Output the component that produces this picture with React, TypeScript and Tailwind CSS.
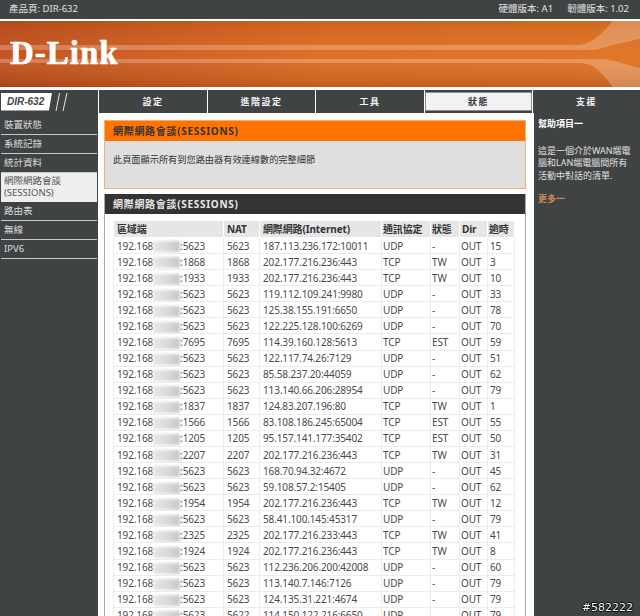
const rows: [string, string, string, string, string, string][] = [
  ['5623', '5623', '187.113.236.172:10011', 'UDP', '-', '15'],
  ['1868', '1868', '202.177.216.236:443', 'TCP', 'TW', '3'],
  ['1933', '1933', '202.177.216.236:443', 'TCP', 'TW', '10'],
  ['5623', '5623', '119.112.109.241:9980', 'UDP', '-', '33'],
  ['5623', '5623', '125.38.155.191:6650', 'UDP', '-', '78'],
  ['5623', '5623', '122.225.128.100:6269', 'UDP', '-', '70'],
  ['7695', '7695', '114.39.160.128:5613', 'TCP', 'EST', '59'],
  ['5623', '5623', '122.117.74.26:7129', 'UDP', '-', '51'],
  ['5623', '5623', '85.58.237.20:44059', 'UDP', '-', '62'],
  ['5623', '5623', '113.140.66.206:28954', 'UDP', '-', '79'],
  ['1837', '1837', '124.83.207.196:80', 'TCP', 'TW', '1'],
  ['1566', '1566', '83.108.186.245:65004', 'TCP', 'EST', '55'],
  ['1205', '1205', '95.157.141.177:35402', 'TCP', 'EST', '50'],
  ['2207', '2207', '202.177.216.236:443', 'TCP', 'TW', '31'],
  ['5623', '5623', '168.70.94.32:4672', 'UDP', '-', '45'],
  ['5623', '5623', '59.108.57.2:15405', 'UDP', '-', '62'],
  ['1954', '1954', '202.177.216.236:443', 'TCP', 'TW', '12'],
  ['5623', '5623', '58.41.100.145:45317', 'UDP', '-', '79'],
  ['2325', '2325', '202.177.216.233:443', 'TCP', 'TW', '41'],
  ['1924', '1924', '202.177.216.236:443', 'TCP', 'TW', '8'],
  ['5623', '5623', '112.236.206.200:42008', 'UDP', '-', '60'],
  ['5623', '5623', '113.140.7.146:7126', 'UDP', '-', '79'],
  ['5623', '5623', '124.135.31.221:4674', 'UDP', '-', '79'],
  ['5623', '5622', '114.150.122.216:6650', 'UDP', '-', '79'],
];

function Banner() {
  return (
    <div className="relative h-[66px] bg-gradient-to-r from-[#c2501c] via-[#dc6c20] to-[#e07222] overflow-hidden">
      <svg className="absolute inset-0" width="640" height="66" viewBox="0 0 640 66">
        <defs>
          <linearGradient id="shade" x1="0" y1="0" x2="0" y2="1">
            <stop offset="0" stopColor="#000" stopOpacity="0.08" />
            <stop offset="0.5" stopColor="#fff" stopOpacity="0.03" />
            <stop offset="1" stopColor="#000" stopOpacity="0.14" />
          </linearGradient>
        </defs>
        <rect width="640" height="66" fill="url(#shade)" />
        <path d="M0 24H580C595 22 603 10 613 0H640V18C610 24 600 29 590 29H0Z" fill="#fff" opacity="0.24" />
        <path d="M0 38H600C615 38 625 44 640 47V66H613C600 50 595 43 580 42H0Z" fill="#fff" opacity="0.24" />
      </svg>
      <span className="absolute left-[10px] top-[14px] text-white font-bold text-[33px] leading-[36px] tracking-[1px] [-webkit-text-stroke:0.6px_white] font-['Liberation_Serif',serif]">
        D-Link
      </span>
    </div>
  );
}

function NavTab({ label, active, w }: { label: string; active?: boolean; w: string }) {
  return (
    <div className={`${w} flex border-l border-white text-[9px] font-bold tracking-[1.5px]`}>
      <div
        className={`flex-1 flex items-center justify-center ${
          active ? 'my-[2px] bg-[#f2f2f2] text-[#333] border border-[#8a8a8a]' : 'text-[#f2f2f2]'
        }`}
      >
        {label}
      </div>
    </div>
  );
}

function SideItem({ label, active, children }: { label?: string; active?: boolean; children?: React.ReactNode }) {
  if (active) {
    return (
      <div className="mx-[1px] h-[29px] bg-[#eeeeee] px-[3px] pt-[2px] text-[#555] text-[9.5px] leading-[12px]">
        {children}
      </div>
    );
  }
  return (
    <div className="mx-[1px] h-[19px] border-b border-[#c8c8c8] px-[3px] flex items-center text-[#dcdcdc] text-[9.5px]">
      {label}
    </div>
  );
}

function Th({ children, pad = 'pl-[3px]' }: { children: React.ReactNode; pad?: string }) {
  return (
    <th className={`bg-[#e6e6e6] text-left align-middle font-bold text-[#333] p-0 ${pad} h-[17px] border border-white`}>
      {children}
    </th>
  );
}

function Td({ children, pad = 'pl-[3px]' }: { children: React.ReactNode; pad?: string }) {
  return (
    <td className={`h-[16.09px] p-0 ${pad} border border-[#ececec] whitespace-nowrap overflow-hidden text-[#4a4a4a]`}>
      {children}
    </td>
  );
}

export default function App() {
  return (
    <div className="relative w-[640px] h-[616px] overflow-hidden bg-[#404344] font-['Tahoma','Noto_Sans','Noto_Sans_CJK_TC',sans-serif]">
      <div className="h-[19px] flex items-center justify-between pl-[9px] pr-[11px] text-[#e4e4e4] text-[9.5px]">
        <span>產品頁: DIR-632</span>
        <div className="flex gap-[14px]">
          <span>硬體版本: A1</span>
          <span>韌體版本: 1.02</span>
        </div>
      </div>
      <div className="h-[2px] bg-white" />
      <Banner />
      <div className="h-[3px] bg-white" />

      <div className="h-[23px] flex">
        <div className="w-[98px] flex items-center pl-[1px] gap-[3px]">
          <div className="w-[51px] h-[18px] bg-white flex items-center pl-[6px] text-[#444] text-[10px] font-bold italic [clip-path:polygon(0_0,100%_0,94%_100%,0_100%)] font-['Liberation_Sans',sans-serif]">
            DIR-632
          </div>
          <svg width="16" height="20" viewBox="0 0 16 20">
            <path d="M4.5 1L1 19M12 1L8 19" stroke="#e8e8e8" strokeWidth="1" fill="none" />
          </svg>
        </div>
        <NavTab label="設定" w="w-[109px]" />
        <NavTab label="進階設定" w="w-[108px]" />
        <NavTab label="工具" w="w-[109px]" />
        <NavTab label="狀態" active w="w-[108px]" />
        <NavTab label="支援" w="w-[108px]" />
      </div>

      <div className="flex h-[503px]">
        <div className="w-[98px] pt-[3px] shrink-0">
          <SideItem label="裝置狀態" />
          <SideItem label="系統記錄" />
          <SideItem label="統計資料" />
          <SideItem active>
            網際網路會談
            <br />
            (SESSIONS)
          </SideItem>
          <SideItem label="路由表" />
          <SideItem label="無線" />
          <SideItem label="IPV6" />
        </div>

        <div className="w-[435px] shrink-0 bg-white pl-[6px] pr-[7px] pt-[7px]">
          <div className="border border-[#f0b070] bg-[#dfdfdf] h-[69px]">
            <div className="h-[20px] bg-[#ff7300] flex items-center pl-[8px] text-[#333] text-[10px] font-bold tracking-[0.7px]">
              網際網路會談(SESSIONS)
            </div>
            <div className="pl-[8px] pt-[12px] text-[#333] text-[9.2px]">此頁面顯示所有到您路由器有效連線數的完整細節</div>
          </div>
          <div className="mt-[5px] border-x border-[#a8a8a8]">
            <div className="h-[20px] bg-[#333333] flex items-center pl-[8px] text-[#e8e8e8] text-[10px] font-bold tracking-[0.7px]">
              網際網路會談(SESSIONS)
            </div>
            <div className="pl-[8px] pt-[6px] h-[500px]">
              <table className="table-fixed w-[401px] border-collapse text-[10px] tracking-[-0.13px] leading-[14px]">
                <colgroup>
                  <col className="w-[110px]" />
                  <col className="w-[36px]" />
                  <col className="w-[122px]" />
                  <col className="w-[49px]" />
                  <col className="w-[29px]" />
                  <col className="w-[28px]" />
                  <col className="w-[27px]" />
                </colgroup>
                <thead>
                  <tr>
                    <Th>區域端</Th>
                    <Th>NAT</Th>
                    <Th>網際網路(Internet)</Th>
                    <Th pad="pl-[1px]">通訊協定</Th>
                    <Th pad="pl-[1px]">狀態</Th>
                    <Th pad="pl-[2px]">Dir</Th>
                    <Th pad="pl-[1px]">逾時</Th>
                  </tr>
                </thead>
                <tbody>
                  {rows.map((r, i) => (
                    <tr key={i}>
                      <Td>
                        192.168
                        <span className="inline-block w-[27px] h-[11px] align-middle bg-gradient-to-r from-[#e6e6e6] via-[#dadada] to-[#c6c6c6] blur-[1.5px]" />
                        :{r[0]}
                      </Td>
                      <Td>{r[1]}</Td>
                      <Td>{r[2]}</Td>
                      <Td pad="pl-[1px]">{r[3]}</Td>
                      <Td pad="pl-[1px]">{r[4]}</Td>
                      <Td pad="pl-[1px]">OUT</Td>
                      <Td pad="pl-[2px]">{r[5]}</Td>
                    </tr>
                  ))}
                </tbody>
              </table>
            </div>
          </div>
        </div>

        <div className="flex-1 border-l border-white pl-[4px] pr-[6px] pt-[5px] text-[9px] leading-[12.5px]">
          <div className="font-bold text-white">幫助項目一</div>
          <p className="mt-[14px] text-[#e0e0e0]">這是一個介於WAN端電腦和LAN端電腦間所有活動中對話的清單.</p>
          <div className="mt-[11px] font-bold text-[#c88a55]">更多一</div>
        </div>
      </div>

      <span className="absolute right-[7px] bottom-[2px] leading-[12px] text-white text-[11px] [text-shadow:-1px_0_#000,1px_0_#000,0_-1px_#000,0_1px_#000] font-['DejaVu_Sans',sans-serif]">
        #582222
      </span>
    </div>
  );
}
